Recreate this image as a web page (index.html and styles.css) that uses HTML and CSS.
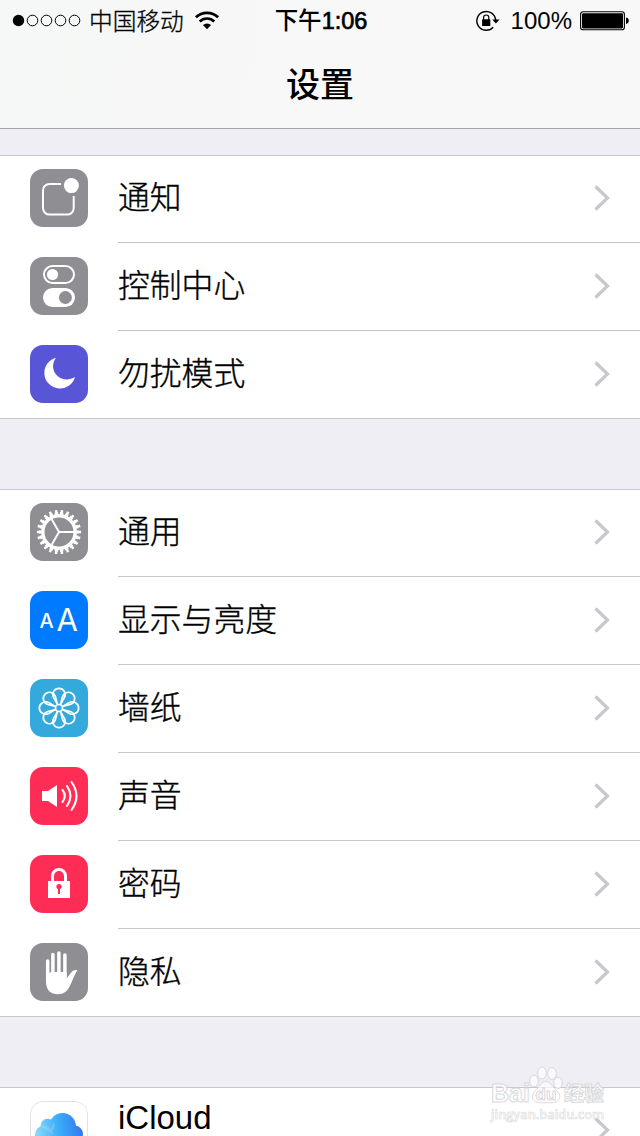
FILE: index.html
```html
<!DOCTYPE html>
<html lang="zh-CN">
<head>
  <meta charset="UTF-8">
  <meta name="viewport" content="width=device-width, initial-scale=1.0">
  <title>设置</title>
  <link rel="stylesheet" href="styles.css">
</head>
<body>
  <div class="screen">
    <header class="header">
      <div class="status-bar">
        <div class="status-left">
          <svg class="signal" width="70" height="14" viewBox="0 0 70 14">
            <circle cx="6.5" cy="6.5" r="5.7"/>
            <g fill="none" stroke="#000" stroke-width="1">
              <circle cx="20.5" cy="6.5" r="5.3"/>
              <circle cx="34.5" cy="6.5" r="5.3"/>
              <circle cx="48.5" cy="6.5" r="5.3"/>
              <circle cx="62.5" cy="6.5" r="5.3"/>
            </g>
          </svg>
          <span class="carrier">中国移动</span>
          <svg class="wifi" width="26" height="20" viewBox="0 0 26 20">
            <g fill="none" stroke="#000" stroke-width="2.7">
              <path d="M1.9 6.3a16 16 0 0 1 22.2 0"/>
              <path d="M5.7 10.5a10.4 10.4 0 0 1 14.6 0"/>
            </g>
            <path d="M8.9 14a6.2 6.2 0 0 1 8.2 0L13 18.3z"/>
          </svg>
        </div>
        <div class="time">下午<span class="digits">1:06</span></div>
        <div class="status-right">
          <svg class="rotation" width="24" height="22" viewBox="0 0 24 22">
            <path d="M17.2 17.2A9.4 9.4 0 1 1 19.6 10" fill="none" stroke="#000" stroke-width="1.4"/>
            <path d="M16.2 9.6h7.4L19.9 13.4z"/>
            <rect x="6.1" y="9.3" width="8.2" height="6.6" rx=".5"/>
            <path d="M7.6 10V7.6a2.6 2.6 0 0 1 5.2 0V10" fill="none" stroke="#000" stroke-width="1.2"/>
          </svg>
          <span class="percent">100%</span>
          <svg class="battery" width="50" height="20" viewBox="0 0 50 20">
            <rect x=".6" y=".8" width="43.8" height="18" rx="2.6" fill="none" stroke="#000" stroke-width="1.1"/>
            <rect x="2" y="2.2" width="41" height="15.2" rx="1.3"/>
            <path d="M46 6.6q2.8.6 2.8 3.2t-2.8 3.2z"/>
          </svg>
        </div>
      </div>
      <h1 class="title">设置</h1>
    </header>

    <main class="settings">
      <ul class="group">
        <li class="row">
          <svg class="icon gray" viewBox="0 0 58 58">
            <path d="M31 14.9H19.5a6.5 6.5 0 0 0-6.5 6.5v17.7a6.5 6.5 0 0 0 6.5 6.5h17.7a6.5 6.5 0 0 0 6.5-6.5V27" fill="none" stroke="#fff" stroke-width="2"/>
            <circle cx="41.4" cy="16.6" r="7.5" fill="#fff"/>
          </svg>
          <div class="cell"><span class="label">通知</span><svg class="chevron" viewBox="0 0 16 26"><path d="M1.5 1.5 13.5 13 1.5 24.5"/></svg></div>
        </li>
        <li class="row">
          <svg class="icon gray" viewBox="0 0 58 58">
            <rect x="14" y="9" width="30" height="17" rx="8.5" fill="none" stroke="#fff" stroke-width="2"/>
            <circle cx="22.5" cy="17.5" r="5.6" fill="#fff"/>
            <rect x="13" y="31" width="32" height="19" rx="9.5" fill="#fff"/>
            <circle cx="35.4" cy="40.5" r="6.5" fill="#8e8e93"/>
          </svg>
          <div class="cell"><span class="label">控制中心</span><svg class="chevron" viewBox="0 0 16 26"><path d="M1.5 1.5 13.5 13 1.5 24.5"/></svg></div>
        </li>
        <li class="row">
          <svg class="icon purple" viewBox="0 0 58 58">
            <path d="M26 12.8A15.6 15.6 0 1 0 45 32C39 36 31.500 34.900 27 30.500S21.500 19 26 12.800z" fill="#fff"/>
          </svg>
          <div class="cell"><span class="label">勿扰模式</span><svg class="chevron" viewBox="0 0 16 26"><path d="M1.5 1.5 13.5 13 1.5 24.5"/></svg></div>
        </li>
      </ul>

      <ul class="group">
        <li class="row">
          <svg class="icon gray" viewBox="0 0 58 58">
            <g fill="none" stroke="#fff">
              <circle cx="29" cy="29" r="16.2" stroke-width="3.4"/>
              <circle cx="29" cy="29" r="18.7" stroke-width="2.4" pathLength="44" stroke-dasharray="1.3 .7" stroke-dashoffset=".65"/>
              <circle cx="29" cy="29" r="20.8" stroke-width="2.6" pathLength="44" stroke-dasharray=".86 1.14" stroke-dashoffset=".43"/>
              <path d="M29 29h16M29 29l-8-14M29 29l-8 14" stroke-width="2"/>
            </g>
          </svg>
          <div class="cell"><span class="label">通用</span><svg class="chevron" viewBox="0 0 16 26"><path d="M1.5 1.5 13.5 13 1.5 24.5"/></svg></div>
        </li>
        <li class="row">
          <svg class="icon blue" viewBox="0 0 58 58">
            <text class="letter-small" x="9.5" y="37">A</text>
            <text class="letter-big" x="26.5" y="39.7">A</text>
          </svg>
          <div class="cell"><span class="label">显示与亮度</span><svg class="chevron" viewBox="0 0 16 26"><path d="M1.5 1.5 13.5 13 1.5 24.5"/></svg></div>
        </li>
        <li class="row">
          <svg class="icon cyan" viewBox="0 0 58 58">
            <defs>
              <path id="petal" d="M27.8 25.7L23.6 18.600A6.200 6.200 0 1 1 34.400 18.600L30.200 25.700"/>
            </defs>
            <g fill="none" stroke="#fff" stroke-width="1.7">
              <circle cx="29" cy="29" r="3.5"/>
              <use href="#petal"/>
              <use href="#petal" transform="rotate(45 29 29)"/>
              <use href="#petal" transform="rotate(90 29 29)"/>
              <use href="#petal" transform="rotate(135 29 29)"/>
              <use href="#petal" transform="rotate(180 29 29)"/>
              <use href="#petal" transform="rotate(225 29 29)"/>
              <use href="#petal" transform="rotate(270 29 29)"/>
              <use href="#petal" transform="rotate(315 29 29)"/>
            </g>
          </svg>
          <div class="cell"><span class="label">墙纸</span><svg class="chevron" viewBox="0 0 16 26"><path d="M1.5 1.5 13.5 13 1.5 24.5"/></svg></div>
        </li>
        <li class="row">
          <svg class="icon red" viewBox="0 0 58 58">
            <path d="M12 24h6l9-6v22l-9-6h-6z" fill="#fff"/>
            <g fill="none" stroke="#fff" stroke-width="2.1" stroke-linecap="round">
              <path d="M32.5 23q4.6 6 0 12"/>
              <path d="M37 19q7 10 0 20"/>
              <path d="M41.5 15q10 14 0 28"/>
            </g>
          </svg>
          <div class="cell"><span class="label">声音</span><svg class="chevron" viewBox="0 0 16 26"><path d="M1.5 1.5 13.5 13 1.5 24.5"/></svg></div>
        </li>
        <li class="row">
          <svg class="icon red" viewBox="0 0 58 58">
            <path d="M22.5 27v-6a6.5 6.5 0 0 1 13 0v6" fill="none" stroke="#fff" stroke-width="3"/>
            <rect x="18" y="26" width="22" height="17" fill="#fff"/>
            <circle cx="29" cy="31.6" r="2.6" fill="#ff2d55"/>
            <path d="M28 32h2v7h-2z" fill="#ff2d55"/>
          </svg>
          <div class="cell"><span class="label">密码</span><svg class="chevron" viewBox="0 0 16 26"><path d="M1.5 1.5 13.5 13 1.5 24.5"/></svg></div>
        </li>
        <li class="row">
          <svg class="icon gray" viewBox="0 0 58 58">
            <g stroke="#fff" stroke-width="3.5" stroke-linecap="round">
              <path d="M17.7 18v20M22.9 11.5v22M28.9 9.9v22M34.9 12v22"/>
            </g>
            <path d="M16 30l3.2 0 2-1h15.4v6.5l4.2-5.5c1.5-2.3 3.5-3.3 6.6-3-3.4 5.5-5.2 12-8.4 17.5-2.4 4.5-6 6.700-11 6.700-8.500 0-12-5-12-13.200z" fill="#fff"/>
          </svg>
          <div class="cell"><span class="label">隐私</span><svg class="chevron" viewBox="0 0 16 26"><path d="M1.5 1.5 13.5 13 1.5 24.5"/></svg></div>
        </li>
      </ul>

      <ul class="group">
        <li class="row">
          <svg class="icon white" viewBox="0 0 58 58">
            <defs>
              <linearGradient id="cloud" gradientUnits="userSpaceOnUse" x1="5" y1="35" x2="53" y2="30">
                <stop offset="0" stop-color="#8edcf8"/>
                <stop offset=".5" stop-color="#3badfa"/>
                <stop offset="1" stop-color="#3478f0"/>
              </linearGradient>
            </defs>
            <rect x=".5" y=".5" width="57" height="57" rx="12.5" fill="#fff" stroke="#e2e2e4"/>
            <g fill="url(#cloud)">
              <circle cx="14" cy="33.5" r="9"/>
              <circle cx="17.5" cy="24.5" r="6.8"/>
              <circle cx="44.5" cy="33" r="8.5"/>
              <circle cx="32.5" cy="25.5" r="13.5"/>
              <rect x="14" y="25" width="30" height="17"/>
            </g>
            <path d="M10.7 25.5a9 9 0 0 1 12.3 8M24 21a6.8 6.8 0 0 1-5 10" fill="#fff" fill-opacity=".15"/>
          </svg>
          <div class="cell"><span class="label latin">iCloud</span><svg class="chevron" viewBox="0 0 16 26"><path d="M1.5 1.5 13.5 13 1.5 24.5"/></svg></div>
        </li>
      </ul>
    </main>

    <div class="watermark">
      <div class="mark-name">
        <span class="mark-bai">Bai</span>
        <svg class="paw" width="34" height="38" viewBox="0 0 34 38">
          <g fill="#fff" fill-opacity=".8" stroke="#d4d4d9">
            <ellipse cx="5" cy="15" rx="4.3" ry="5.8"/>
            <ellipse cx="13" cy="7" rx="4.3" ry="6"/>
            <ellipse cx="23" cy="7.5" rx="4.3" ry="6"/>
            <ellipse cx="29" cy="17" rx="4.3" ry="5.8"/>
            <path d="M17 15.5c-4 0-6 4-9 7.5-3 3-5.5 5-4.5 9 1.3 5 7 5 13.5 4.6 6.5.4 12 .4 13.5-4.6 1-4-2-6.5-4.5-9-3-3.5-5-7.5-9-7.500z"/>
          </g>
          <text class="mark-du" x="17" y="34" text-anchor="middle">du</text>
        </svg>
        <span class="mark-cn">经验</span>
      </div>
      <div class="mark-url">jingyan.baidu.com</div>
    </div>
  </div>
</body>
</html>
```
FILE: styles.css
```css
* {
  box-sizing: border-box;
}

body {
  margin: 0;
  font-family: "Liberation Sans", "Noto Sans CJK SC", sans-serif;
  color: #000;
  background-color: #efeef4;
}

.screen {
  position: relative;
  width: 640px;
  height: 1136px;
  overflow: hidden;
}

.header {
  height: 129px;
  background: linear-gradient(100deg, #f5f8f6 0, #f6f7f6 25%, #f8f8f8 50%);
  border-bottom: 1px solid #a7a7aa;
}

.status-bar {
  display: grid;
  grid-template-columns: 1fr auto 1fr;
  align-items: center;
  height: 41px;
  padding: 0 10px 0 12px;
}

.status-left,
.status-right {
  display: flex;
  align-items: center;
}

.status-right {
  justify-content: flex-end;
}

.carrier {
  margin: 0 0 1px 7px;
  font-family: "Noto Sans CJK SC", sans-serif;
  font-size: 23.7px;
  font-weight: 300;
  line-height: 38px;
  -webkit-text-stroke: .3px #000;
}

.wifi {
  margin-left: 10px;
}

.time {
  font-size: 23.5px;
  font-weight: 500;
  line-height: 40px;
}

.digits {
  -webkit-text-stroke: .7px #000;
}

.percent {
  margin: 0 8px 0 11px;
  font-size: 24px;
}

.title {
  margin: 19px 0 0;
  font-family: "Noto Sans CJK SC", sans-serif;
  font-size: 34px;
  font-weight: 500;
  line-height: 46px;
  text-align: center;
}

.settings {
  padding-top: 26px;
}

.group {
  margin: 0 0 70px;
  padding: 0;
  list-style: none;
  background-color: #fff;
  box-shadow: inset 0 1px #c8c7cc, inset 0 -1px #c8c7cc;
}

.row {
  display: flex;
  height: 88px;
  padding-left: 30px;
}

.icon {
  flex: none;
  width: 58px;
  height: 58px;
  margin: 14px 30px 0 0;
  border-radius: 13px;
}

.gray {
  background-color: #8e8e93;
}

.purple {
  background-color: #5856d6;
}

.blue {
  background-color: #007aff;
}

.cyan {
  background-color: #34aadc;
}

.red {
  background-color: #ff2d55;
}

.white {
  background-color: #fff;
}

.cell {
  display: flex;
  flex: 1;
  justify-content: space-between;
  align-items: center;
  padding-right: 30px;
  border-bottom: 1px solid #c8c7cc;
}

.label {
  margin-bottom: 7px;
  font-family: "Noto Sans CJK SC", sans-serif;
  font-size: 31.8px;
  font-weight: 300;
  line-height: 44px;
  -webkit-text-stroke: .35px #000;
}

.latin {
  margin-bottom: 26px;
  font-family: "Liberation Sans", sans-serif;
  font-size: 33px;
  -webkit-text-stroke: 0;
}

.chevron {
  width: 16px;
  height: 26px;
  margin-bottom: 2px;
  fill: none;
  stroke: #c7c7cc;
  stroke-width: 3.2;
}

.letter-small,
.letter-big {
  font-family: Inter, "Liberation Sans", sans-serif;
  fill: #fff;
}

.letter-small {
  font-size: 20px;
  font-weight: 500;
}

.letter-big {
  font-size: 31px;
}

/* watermark lies over the last group */
.watermark {
  position: absolute;
  left: 491px;
  top: 1066px;
  width: 120px;
  font-family: "Liberation Sans", sans-serif;
  font-weight: bold;
  color: #fff;
  opacity: .85;
  -webkit-text-stroke: 1px #d4d4d9;
}

.mark-name {
  display: flex;
  align-items: flex-end;
  height: 38px;
}

.mark-bai {
  font-size: 25px;
  line-height: 22px;
}

.paw {
  margin: 0 1px 0 -1px;
}

.mark-du {
  font-size: 17px;
  fill: #fff;
  stroke: #d4d4d9;
  stroke-width: 1px;
}

.mark-cn {
  font-family: "Noto Sans CJK SC", sans-serif;
  font-size: 20px;
  line-height: 22px;
}

.mark-url {
  margin-top: 2px;
  font-family: "Open Sans", sans-serif;
  font-size: 12.8px;
  font-weight: 600;
  line-height: 16px;
  -webkit-text-stroke: .6px #d4d4d9;
}
```
